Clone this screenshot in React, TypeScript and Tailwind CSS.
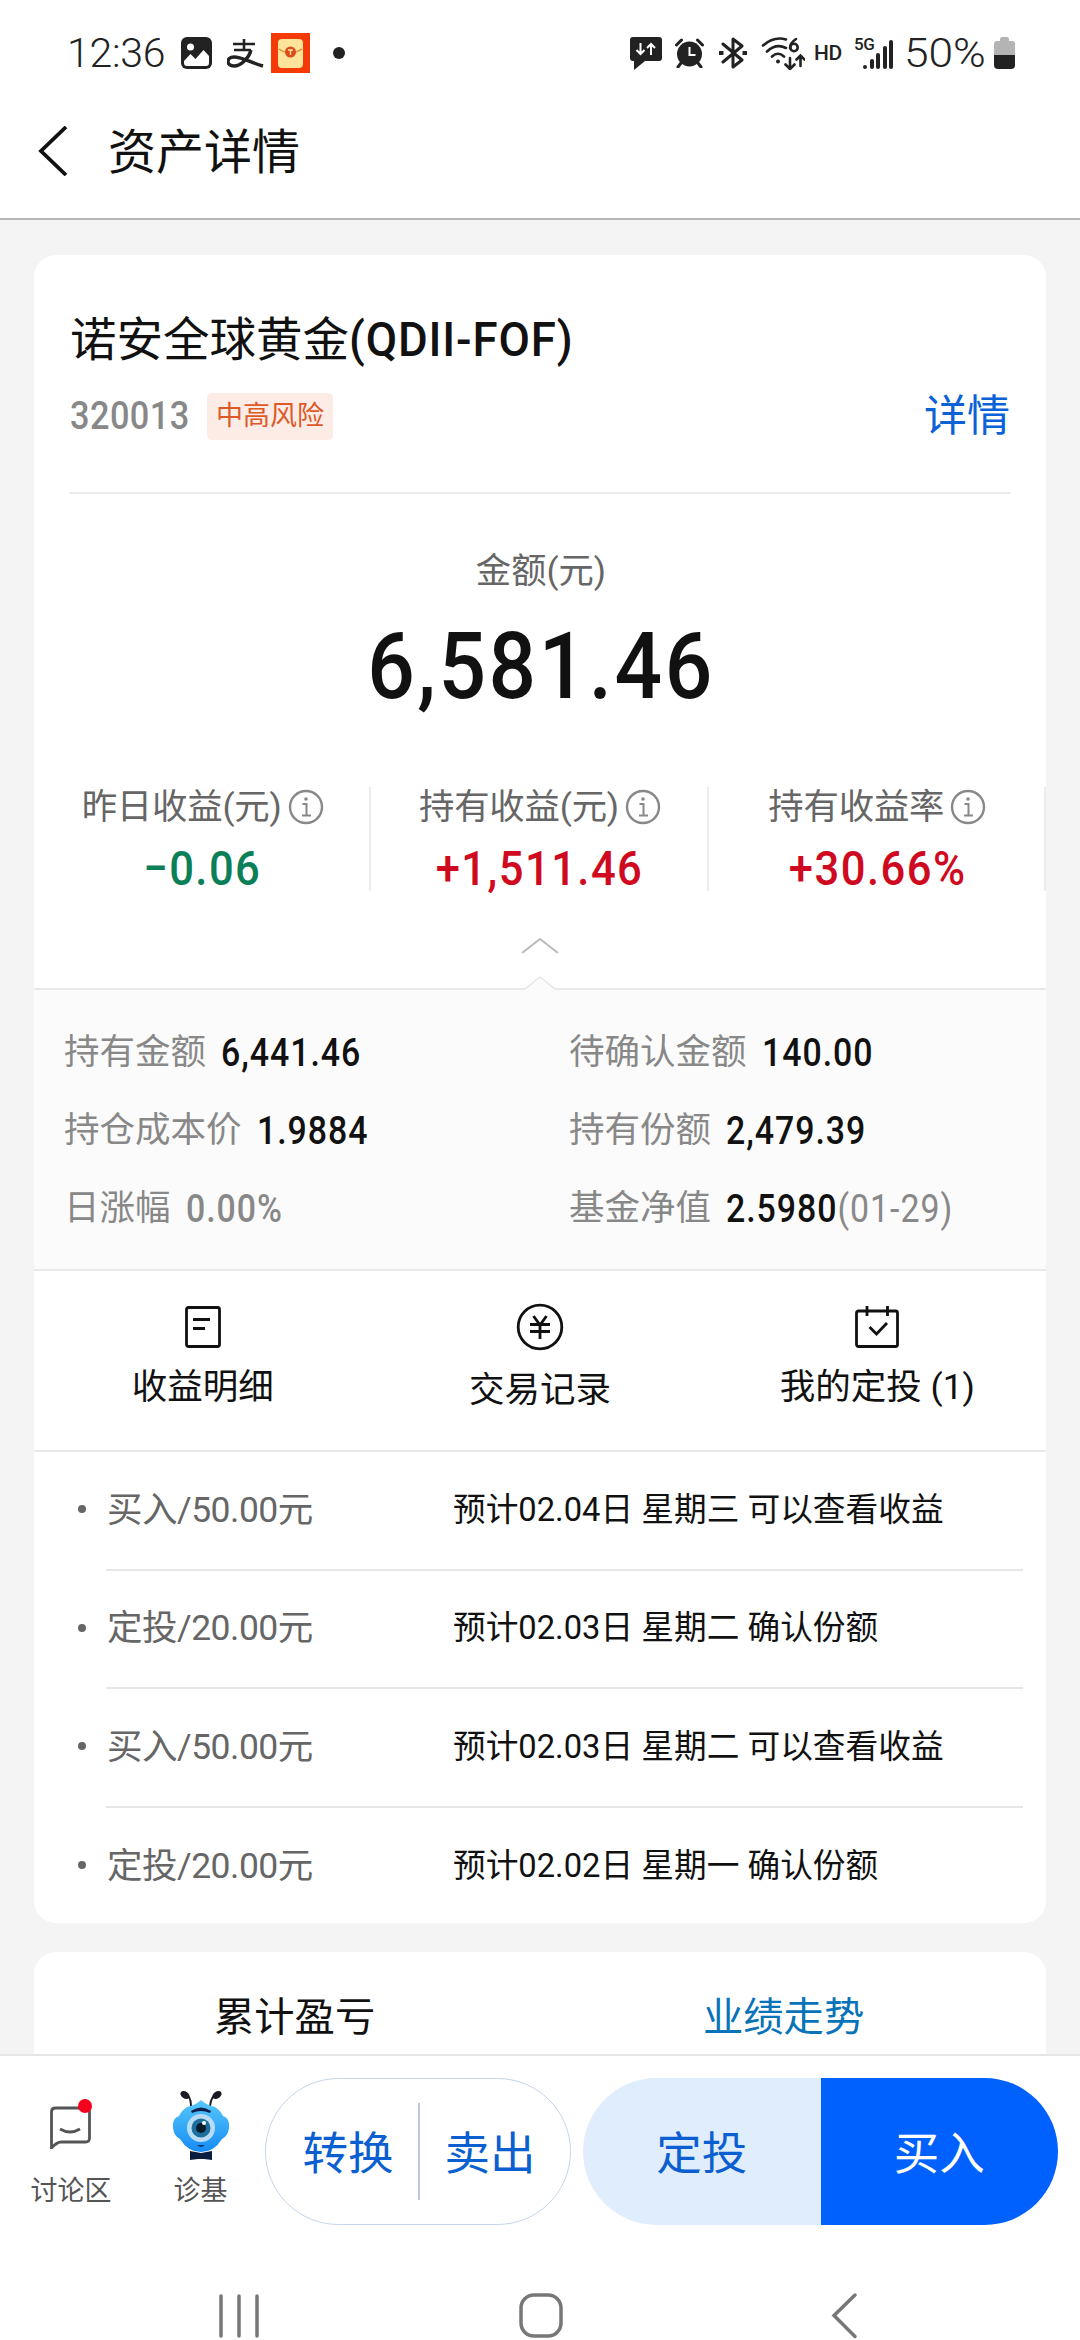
import type { ReactNode } from 'react';
import { clsx } from 'clsx';

interface Stat {
    label: string;
    value: string;
    color: string;
}

interface Detail {
    label: string;
    value: string;
    muted?: boolean;
    date?: string;
}

interface Order {
    name: string;
    note: string;
}

const stats: Stat[] = [
    { label: '昨日收益(元)', value: '−0.06', color: 'text-[#0b7f58]' },
    { label: '持有收益(元)', value: '+1,511.46', color: 'text-[#cf0a20]' },
    { label: '持有收益率', value: '+30.66%', color: 'text-[#cf0a20]' },
];

const details: Detail[] = [
    { label: '持有金额', value: '6,441.46' },
    { label: '待确认金额', value: '140.00' },
    { label: '持仓成本价', value: '1.9884' },
    { label: '持有份额', value: '2,479.39' },
    { label: '日涨幅', value: '0.00%', muted: true },
    { label: '基金净值', value: '2.5980', date: '(01-29)' },
];

const orders: Order[] = [
    { name: '买入/50.00元', note: '预计02.04日 星期三 可以查看收益' },
    { name: '定投/20.00元', note: '预计02.03日 星期二 确认份额' },
    { name: '买入/50.00元', note: '预计02.03日 星期二 可以查看收益' },
    { name: '定投/20.00元', note: '预计02.02日 星期一 确认份额' },
];

const StatusBar = () => (
    <div className="flex h-[106px] shrink-0 items-center pr-[65px] pl-[67px] text-[41px] leading-none font-light text-[#222]">
        <span className="w-[114px] tracking-[-0.3px]">12:36</span>
        <svg width="31" height="32" viewBox="0 0 31 32">
            <rect width="31" height="32" rx="6" fill="#222" />
            <circle cx="9.500" cy="10" r="3.500" fill="#fff" />
            <path d="M3 24l6.500-7 5 5 8-9 5.500 6v7q0 3-3 3H6q-3 0-3-3z" fill="#fff" />
        </svg>
        <svg className="ml-[15px]" width="37" height="30" viewBox="0 0 37 30" fill="none" stroke="#222">
            <path d="M6 6h22M17 1v11M7 12h17" strokeWidth="2.600" />
            <path d="M24 12C22 20 14 28 7 28c-8 0-8-9 0-9 8 0 18 6 29 9" strokeWidth="3.400" />
        </svg>
        <svg className="ml-[7px]" width="39" height="40" viewBox="0 0 39 40">
            <rect width="39" height="40" fill="#f43a06" />
            <rect x="7" y="6" width="25" height="29" rx="4" fill="#fde49a" />
            <path d="M8 16q11 8 23 0" fill="none" stroke="#d9822b" strokeWidth="1.500" />
            <circle cx="19.500" cy="19" r="5.500" fill="#dd4b1a" />
            <path d="M17 17h5M19.500 17v5" stroke="#fde49a" strokeWidth="1.300" />
        </svg>
        <span className="ml-[23px] size-3 rounded-full bg-[#222]" />

        <svg className="ml-auto" width="32" height="33" viewBox="0 0 32 33">
            <path d="M3 0h26q3 0 3 3v18q0 3-3 3H15L4 33V24H3q-3 0-3-3V3q0-3 3-3z" fill="#222" />
            <path d="M10.500 6v11M6.500 13l4 4 4-4M21 18V7M17 11l4-4 4 4" fill="none" stroke="#fff" strokeWidth="2" />
        </svg>
        <svg className="ml-[13px]" width="29" height="30" viewBox="0 0 29 30">
            <circle cx="14.500" cy="16" r="12.500" fill="#222" />
            <path d="M1.500 7l5-5M27.500 7l-5-5M6 25l-3 4M23 25l3 4" stroke="#222" strokeWidth="3" strokeLinecap="round" />
            <path d="M14.500 9v8h6" fill="none" stroke="#fff" strokeWidth="2" />
        </svg>
        <svg className="ml-[15px]" width="28" height="32" viewBox="0 0 28 32" fill="none" stroke="#222" strokeWidth="3" strokeLinejoin="round">
            <path d="M4 7l19 16-9 7V2l9 7L4 25" strokeLinecap="round" />
            <path d="M2 16h.5M25.500 16h.5" strokeWidth="4" strokeLinecap="square" />
        </svg>
        <svg className="ml-[14px]" width="44" height="33" viewBox="0 0 44 33" fill="none" stroke="#222" strokeWidth="2.600" strokeLinecap="round">
            <path d="M2 8.500Q13-1 25 2.500M6 14.500Q15 6 25 11M11 19.500Q17 14 23 19.500" />
            <circle cx="17" cy="24.500" r="2" fill="#222" stroke="none" />
            <path d="M35 2q-6 4-6 9" />
            <circle cx="33" cy="10.500" r="3.700" />
            <path d="M29 21v10M24.500 27.500L29 32l4.500-4.500M39.500 29V19M35.500 22.500l4-4 4 4" />
        </svg>
        <span className="ml-[9px] w-[40px] text-[21px] font-medium tracking-[-0.500px]">HD</span>
        <span className="relative flex h-[32px] w-[39px] items-end justify-end gap-[2.400px]">
            <span className="absolute -top-[1px] left-0 text-[17px] leading-none font-medium tracking-[-0.5px]">5G</span>
            <i className="h-1 w-[4px] rounded-full bg-[#222]" />
            <i className="h-2.5 w-[4px] rounded-full bg-[#222]" />
            <i className="h-4 w-[4px] rounded-full bg-[#222]" />
            <i className="h-[23px] w-[4px] rounded-full bg-[#222]" />
            <i className="h-[29px] w-[4px] rounded-full bg-[#222]" />
        </span>
        <span className="ml-[11px] w-[90px] origin-left scale-x-[1.08]">50%</span>
        <svg width="21" height="32" viewBox="0 0 21 32">
            <path d="M6 2q0-2 2-2h5q2 0 2 2v2h3q3 0 3 3v12H0V7q0-3 3-3h3z" fill="#b4b4b4" />
            <path d="M0 18h21v10q0 4-4 4H4q-4 0-4-4z" fill="#222" />
        </svg>
    </div>
);

const InfoIcon = () => (
    <svg className="shrink-0" width="36" height="36" viewBox="0 0 36 36" fill="none" stroke="#888" strokeWidth="2.400">
        <circle cx="18" cy="18" r="16" />
        <path d="M14.500 15H18.500V26M14 26.500h9" strokeWidth="2" />
        <circle cx="18" cy="10" r="1.800" fill="#888" stroke="none" />
    </svg>
);

const Action = ({ icon, label, className }: { icon: ReactNode; label: string; className?: string }) => (
    <div className={clsx('flex flex-1 flex-col items-center text-[35.5px] leading-[52px] text-[#111]', className)}>
        <div className="flex h-[48px] items-center">{icon}</div>
        <span className="mt-[10px]">{label}</span>
    </div>
);

const FundCard = () => (
    <section className="mx-[34px] mt-[35px] flex h-[1668px] shrink-0 flex-col overflow-hidden rounded-[22px] bg-white">
        {/* 基金名称 */}
        <div className="mx-[36px] h-[239px] shrink-0 border-b-2 border-[#ebebeb] pt-[55px]">
            <h1 className="flex text-[46.5px] leading-[60px] text-[#111]">
                诺安全球黄金
                <span className="origin-left scale-x-[0.95] text-[48px] font-medium tracking-[0.9px]">(QDII-FOF)</span>
            </h1>
            <div className="mt-[16px] flex h-[60px] items-center">
                <span className="w-[118px] origin-left scale-x-[0.88] text-[39px] font-medium tracking-[0.5px] text-[#888]">320013</span>
                <span className="ml-[19px] flex h-[47px] w-[126px] items-center justify-center rounded-[5px] bg-[#fdece6] text-[27px] text-[#dc5a28]">中高风险</span>
                <span className="ml-auto text-[43px] text-[#0b62d6]">详情</span>
            </div>
        </div>

        <div className="flex h-[251px] shrink-0 flex-col items-center pt-[51px]">
            <span className="pl-[2px] text-[35.300px] leading-[52px] text-[#666]">金额(元)</span>
            <span className="mt-[15px] scale-x-[0.9] pl-[3px] text-[93px] leading-[110px] font-medium tracking-[2.800px] text-[#111]">6,581.46</span>
        </div>

        <div className="mt-[42px] flex h-[104px] shrink-0">
            {stats.map((s) => (
                <div key={s.label} className="flex flex-1 flex-col items-center border-r-2 border-[#ececec] leading-none">
                    <span className="flex items-center gap-[6px] pl-[2px] text-[35.400px] leading-[40px] tracking-[-0.2px] text-[#666]">
                        {s.label}
                        <InfoIcon />
                    </span>
                    <span className={clsx('mt-[17px] scale-x-[0.89] pl-[2px] text-[49px] font-medium tracking-[1.600px]', s.color)}>{s.value}</span>
                </div>
            ))}
        </div>

        <div className="flex h-[97px] shrink-0 flex-col items-center justify-end">
            <svg width="38" height="17" viewBox="0 0 38 17" fill="none" stroke="#bbb" strokeWidth="2">
                <path d="M1 16L19 2l18 14" />
            </svg>
            <svg className="relative top-[2px] mt-[20px]" width="30" height="14" viewBox="0 0 30 14">
                <path d="M0 13L15 1l15 12v1H0z" fill="#fbfbfb" />
                <path d="M0 13L15 1l15 12" fill="none" stroke="#e6e6e6" strokeWidth="1.500" />
            </svg>
        </div>

        <div className="grid h-[283px] shrink-0 grid-cols-[505px_1fr] content-start border-y-2 border-[#e9e9e9] bg-[#fbfbfb] pt-[24px] pl-[30px]">
            {details.map((d) => (
                <div key={d.label} className="flex h-[78px] items-center whitespace-nowrap text-[35.500px] text-[#888]">
                    {d.label}
                    <span className="ml-[15px] origin-left scale-x-[0.88] text-[38.500px] tracking-[1.100px]">
                        <span className={clsx('font-medium', d.muted ? 'text-[#888]' : 'text-[#111]')}>{d.value}</span>
                        {d.date}
                    </span>
                </div>
            ))}
        </div>

        <div className="flex h-[181px] shrink-0 border-b-2 border-[#e9e9e9] pt-[32px]">
            <Action
                label="收益明细"
                icon={
                    <svg width="36" height="42" viewBox="0 0 36 42" fill="none" stroke="#111" strokeWidth="2.800">
                        <rect x="1.500" y="1.500" width="33" height="39" rx="2" />
                        <path d="M8 13.500h17M8 22.500h12" />
                    </svg>
                }
            />
            <Action
                label="交易记录"
                className="[&>span]:mt-[13px]"
                icon={
                    <svg width="48" height="48" viewBox="0 0 48 48" fill="none" stroke="#111" strokeWidth="2.800">
                        <circle cx="24" cy="24" r="21.800" />
                        <path d="M17.500 13l6.500 9 6.500-9M24 22v14M14 21.500h20M14 28.500h20" />
                    </svg>
                }
            />
            <Action
                label="我的定投 (1)"
                icon={
                    <svg width="44" height="42" viewBox="0 0 44 42" fill="none" stroke="#111" strokeWidth="2.800">
                        <rect x="1.500" y="5" width="41" height="35.500" rx="2" />
                        <path d="M12 0v10M32.500 0v10M14.500 21l7 7L32 17" />
                    </svg>
                }
            />
        </div>

        {orders.map((o, i) => (
            <div key={i} className="flex h-[118.500px] shrink-0 items-center pl-[44px] text-[35.500px]">
                <i className="relative -top-[2px] size-2 rounded-full bg-[#666]" />
                <div className={clsx('ml-[20px] flex h-full w-[917px] items-center border-[#e6e6e6]', i < orders.length - 1 && 'border-b-2')}>
                    <span className="w-[347px] pl-px tracking-[-0.500px] text-[#666]">{o.name}</span>
                    <span className="text-[32.700px] whitespace-nowrap text-[#111]">{o.note}</span>
                </div>
            </div>
        ))}
    </section>
);

const MessageIcon = () => (
    <svg width="46" height="54" viewBox="0 0 46 54" fill="none" stroke="#555" strokeWidth="2.800">
        <path d="M3.500 53V17q0-4 4-4h30q4 0 4 4v26q0 4-4 4H13q-4 0-9.500 6z" />
        <path d="M12 34q10 6 20 0" />
        <circle cx="37" cy="11" r="7" fill="#f5001d" stroke="none" />
    </svg>
);

const Mascot = () => (
    <svg width="60" height="72" viewBox="0 0 60 72">
        <defs>
            <linearGradient id="body" x1="0" y1="0" x2="0" y2="1">
                <stop offset="0" stopColor="#56c8fb" />
                <stop offset="1" stopColor="#168cf5" />
            </linearGradient>
        </defs>
        <path d="M20 16Q20 6 14 4M39 16Q40 6 46 4" fill="none" stroke="#1a1a24" strokeWidth="2" />
        <ellipse cx="14" cy="5" rx="5" ry="3.500" transform="rotate(35 14 5)" fill="#1a1a24" />
        <ellipse cx="46" cy="5" rx="5" ry="3.500" transform="rotate(-35 46 5)" fill="#1a1a24" />
        <path d="M30 10q5 5 14 7 5 3 8 9 7 2 6 12-1 8-7 11-8 13-21 13T9 49q-6-3-7-11-1-10 6-12 3-6 8-9 9-2 14-7z" fill="url(#body)" />
        <path d="M20 21q10-7 20 0l-1 2q-9-4-18 0z" fill="#10204a" />
        <circle cx="30" cy="38" r="14" fill="#b9dcf6" />
        <circle cx="30" cy="38" r="9.500" fill="#1c6f9c" />
        <circle cx="30" cy="38" r="5" fill="#071b2c" />
        <circle cx="33" cy="33" r="2" fill="#fff" />
        <path d="M26 55q4 4 8 0z" fill="#0d3b7c" />
        <path d="M19 61l11 2 11-2v9l-8-1h-6l-8 1z" fill="#0b1d3f" />
    </svg>
);

const BottomBar = () => (
    <div className="flex h-[286px] shrink-0 flex-col border-t-2 border-[#e6e6e6] bg-white">
        <div className="mt-[22px] flex h-[147px] shrink-0 text-[45.500px]">
            <div className="flex w-[142px] flex-col items-center text-[27px] leading-[40px] text-[#555]">
                <div className="mt-[17px] h-[76px]"><MessageIcon /></div>
                讨论区
            </div>
            <div className="flex w-[117px] flex-col items-center text-[27px] leading-[40px] text-[#555]">
                <div className="mt-[12px] h-[81px]"><Mascot /></div>
                诊基
            </div>
            <div className="ml-[6px] flex w-[306px] items-center rounded-full border border-[#c5d5ea] text-[#0b5fd0]">
                <span className="w-[152px] pt-[7px] pl-[12px] text-center">转换</span>
                <i className="h-[97px] w-[2px] bg-[#b9c9e0]" />
                <span className="flex-1 pt-[7px] pr-[10px] text-center">卖出</span>
            </div>
            <div className="ml-[12px] flex w-[475px] overflow-hidden rounded-full">
                <span className="flex flex-1 items-center justify-center bg-[#dfedfd] pt-[7px] text-[#0b5fd0]">定投</span>
                <span className="flex flex-1 items-center justify-center bg-[#0061ff] pt-[7px] text-white">买入</span>
            </div>
        </div>
        <svg className="mt-auto" width="1080" height="50" viewBox="0 2290 1080 50" fill="none" stroke="#777" strokeWidth="3.500" strokeLinecap="round">
            <path d="M221 2296v40M239 2296v40M257 2296v40" />
            <rect x="521" y="2295" width="40" height="41" rx="13" />
            <path d="M855 2295l-21 20.500 21 21" />
        </svg>
    </div>
);

export default function App() {
    return (
        <div className="flex h-[2340px] w-[1080px] flex-col overflow-hidden bg-[#f4f4f4] font-[Roboto,'Noto_Sans_CJK_SC',sans-serif]">
            <div className="flex h-[220px] shrink-0 flex-col border-b-2 border-[#b5b5b5] bg-white">
                <StatusBar />
                <div className="flex h-[90px] items-center pl-[38px]">
                    <svg width="30" height="50" viewBox="0 0 30 50" fill="none" stroke="#111" strokeWidth="3.800">
                        <path d="M28 1L3 25l25 24" />
                    </svg>
                    <span className="ml-[40px] pt-[4px] text-[48px] text-[#111]">资产详情</span>
                </div>
            </div>

            <FundCard />

            <section className="mx-[34px] mt-[29px] flex min-h-0 flex-1 rounded-t-[22px] bg-white pt-[36px] text-[40.300px] leading-[60px]">
                <span className="flex-1 pl-[180px] text-[#111]">累计盈亏</span>
                <span className="w-[343px] text-[#0873b9]">业绩走势</span>
            </section>

            <BottomBar />
        </div>
    );
}
